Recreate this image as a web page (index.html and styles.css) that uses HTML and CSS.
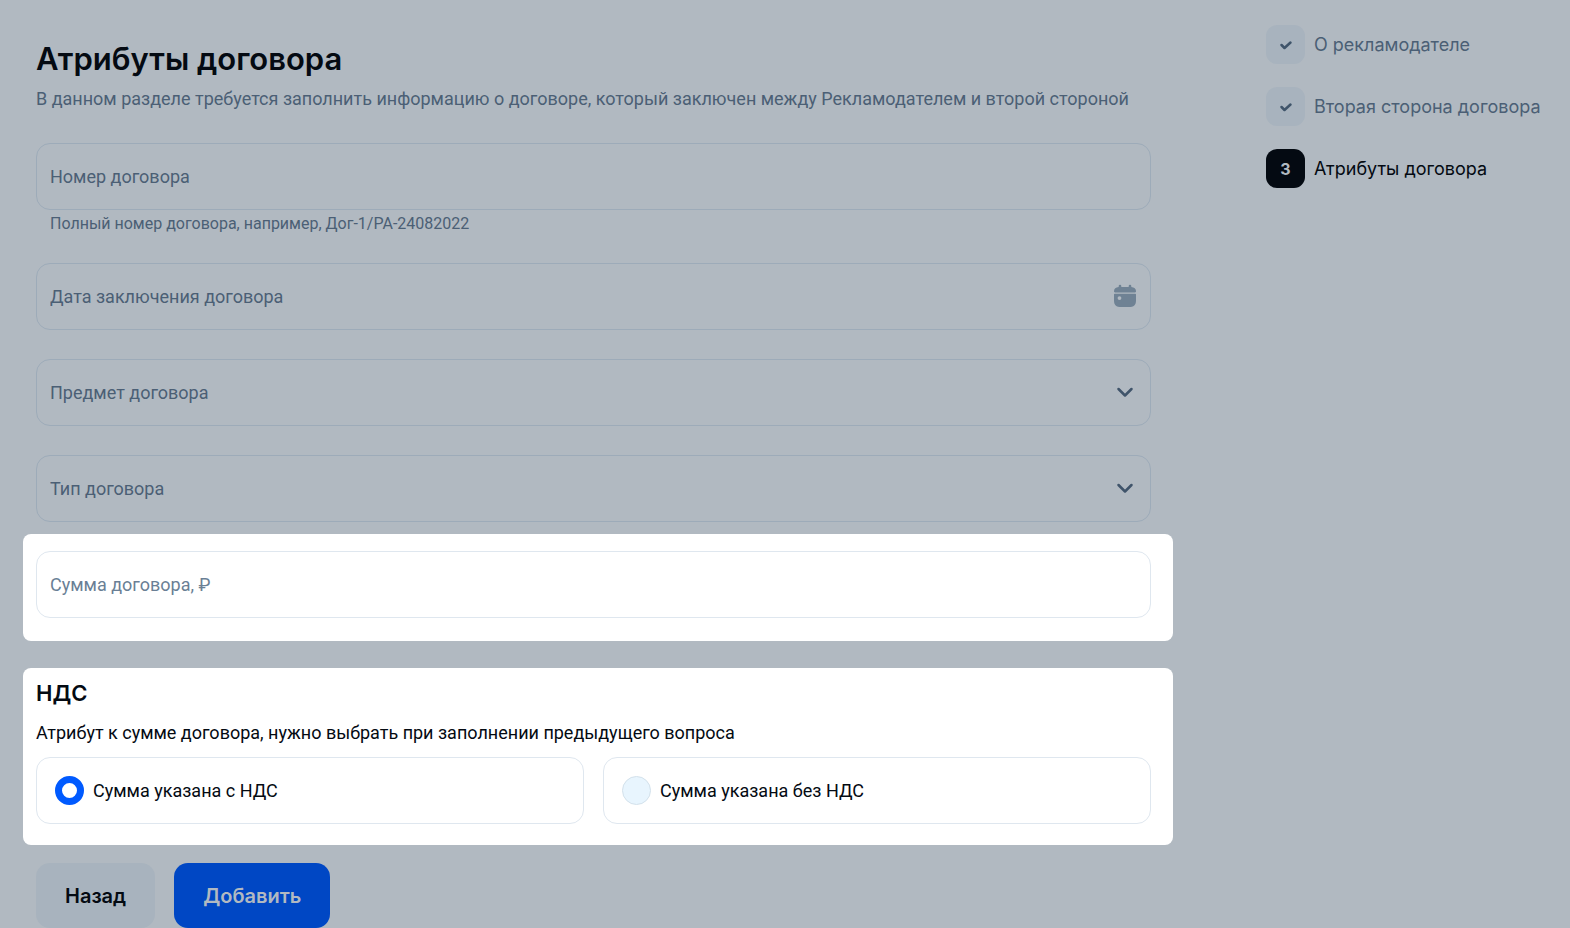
FILE: index.html
```html
<!DOCTYPE html>
<html lang="ru">
<head>
<meta charset="utf-8">
<meta name="viewport" content="width=device-width, initial-scale=1">
<title>Атрибуты договора</title>
<link rel="stylesheet" href="styles.css">
</head>
<body>
<div class="page">
  <form class="form">
    <header class="intro">
      <h1 class="title">Атрибуты договора</h1>
      <p class="lead">В данном разделе требуется заполнить информацию о договоре, который заключен между Рекламодателем и второй стороной</p>
    </header>

    <div class="fields">
      <div class="field">
        <input class="control" type="text" placeholder="Номер договора" aria-label="Номер договора" aria-describedby="number-hint">
        <p class="hint" id="number-hint">Полный номер договора, например, Дог-1/РА-24082022</p>
      </div>
      <div class="field">
        <input class="control" type="text" placeholder="Дата заключения договора" aria-label="Дата заключения договора">
        <svg class="field-icon calendar" viewBox="0 0 24 24" aria-hidden="true">
          <path d="M7 .8a1.300 1.300 0 0 1 1.300 1.300V3h7.400v-.9a1.300 1.300 0 0 1 2.600 0v1C21.300 3.400 23 4.900 23 7.200c0 .75-.4 1.200-1.100 1.200H2.100C1.400 8.400 1 7.950 1 7.200c0-2.300 1.700-3.800 4.700-4.100v-1A1.300 1.300 0 0 1 7 .8Z"/>
          <path fill-rule="evenodd" d="M1.800 9.800h20.400c.5 0 .8.3.8.8v5.600c0 5-2 6.800-7.500 6.800h-7C3 23 1 21.200 1 16.200v-5.600c0-.5.3-.8.800-.8ZM6.500 12.200a1.900 1.900 0 1 0 0 3.800 1.900 1.900 0 0 0 0-3.800Z"/>
        </svg>
      </div>
      <div class="field">
        <select class="control" aria-label="Предмет договора"><option>Предмет договора</option></select>
        <svg class="field-icon chevron" viewBox="0 0 24 24" aria-hidden="true"><path d="m5.500 9 6.500 6.500L18.500 9"/></svg>
      </div>
      <div class="field">
        <select class="control" aria-label="Тип договора"><option>Тип договора</option></select>
        <svg class="field-icon chevron" viewBox="0 0 24 24" aria-hidden="true"><path d="m5.500 9 6.500 6.500L18.500 9"/></svg>
      </div>
    </div>

    <section class="panel panel-sum">
      <input class="control control-lit" type="text" placeholder="Сумма договора, ₽" aria-label="Сумма договора, ₽">
    </section>

    <fieldset class="panel panel-vat">
      <legend class="vat-title">НДС</legend>
      <p class="vat-text">Атрибут к сумме договора, нужно выбрать при заполнении предыдущего вопроса</p>
      <div class="choices">
        <label class="choice"><input class="radio" type="radio" name="vat" checked>Сумма указана с НДС</label>
        <label class="choice"><input class="radio" type="radio" name="vat">Сумма указана без НДС</label>
      </div>
    </fieldset>

    <div class="actions">
      <button class="button button-back" type="button">Назад</button>
      <button class="button button-add" type="submit">Добавить</button>
    </div>
  </form>

  <ol class="steps">
    <li class="step">
      <span class="badge"><svg class="check" viewBox="0 0 16 16" aria-hidden="true"><path d="m3.500 8 3 3 6-5.500"/></svg></span>
      О рекламодателе
    </li>
    <li class="step">
      <span class="badge"><svg class="check" viewBox="0 0 16 16" aria-hidden="true"><path d="m3.500 8 3 3 6-5.500"/></svg></span>
      Вторая сторона договора
    </li>
    <li class="step step-current" aria-current="step">
      <span class="badge">3</span>
      Атрибуты договора
    </li>
  </ol>
</div>
</body>
</html>
```
FILE: styles.css
```css
:root {
  --dim: #b1b9c1;
  --dim-line: #9dabb9;
  --dim-fill: #a8b3be;
  --slate: #4b5f75;
  --ink: #040a12;
  --line: #dfe7ef;
  --blue: #005aff;
}

* {
  box-sizing: border-box;
}

body {
  margin: 0;
  background: var(--dim);
  color: var(--ink);
  font: 18px/24px Roboto, "Noto Sans", sans-serif;
}

h1, p, ol, fieldset {
  margin: 0;
  padding: 0;
  border: 0;
}

.page {
  display: flex;
  gap: 93px;
  padding: 25px 32px 0 23px;
}

.form {
  flex: 1;
  min-width: 0;
}

.intro,
.fields,
.actions {
  padding: 0 22px 0 13px;
}

.intro {
  padding-top: 14px;
}

.title {
  font-family: Inter, sans-serif;
  font-size: 31px;
  line-height: 40px;
  font-weight: 600;
}

.lead {
  margin-top: 8px;
  color: var(--slate);
}

.fields {
  display: flex;
  flex-direction: column;
  gap: 29px;
  margin-top: 32px;
}

.field {
  position: relative;
}

.control {
  display: block;
  width: 100%;
  height: 67px;
  padding: 0 13px;
  border: 1px solid var(--dim-line);
  border-radius: 14px;
  background: transparent;
  color: var(--slate);
  font: inherit;
  appearance: none;
}

.control::placeholder {
  color: inherit;
  opacity: 1;
}

.control-lit {
  border-color: var(--line);
  color: #6a7f95;
}

.hint {
  padding: 4px 14px 0;
  color: var(--slate);
  font-size: 16px;
  line-height: 20px;
}

.field-icon {
  position: absolute;
  top: 21px;
  right: 14px;
  width: 24px;
  height: 24px;
  pointer-events: none;
}

.calendar {
  fill: #6f8294;
}

.chevron {
  fill: none;
  stroke: #3f546a;
  stroke-width: 2.5;
  stroke-linecap: round;
  stroke-linejoin: round;
}

.panel {
  border-radius: 8px;
  background: #fff;
}

.panel-sum {
  margin-top: 12px;
  padding: 17px 22px 23px 13px;
}

.panel-vat {
  min-width: 0;
  margin-top: 27px;
  padding: 9px 22px 21px 13px;
}

.vat-title {
  float: left;
  width: 100%;
  padding: 0;
  font-family: Inter, sans-serif;
  font-size: 22px;
  line-height: 32px;
  font-weight: 600;
}

.vat-text {
  clear: both;
  padding: 12px 0;
}

.choices {
  display: grid;
  grid-template-columns: 1fr 1fr;
  gap: 19px;
}

.choice {
  display: flex;
  align-items: center;
  gap: 9px;
  height: 67px;
  padding: 0 18px;
  border: 1px solid var(--line);
  border-radius: 14px;
}

.radio {
  width: 29px;
  height: 29px;
  margin: 0;
  border: 1px solid #d3e1eb;
  border-radius: 50%;
  background: #e8f5fe;
  appearance: none;
}

.radio:checked {
  border: 7px solid var(--blue);
  background: #fff;
}

.actions {
  display: flex;
  gap: 19px;
  margin-top: 18px;
}

.button {
  height: 65px;
  padding: 0 29px;
  border: 0;
  border-radius: 14px;
  font: 600 20px/24px Inter, sans-serif;
}

.button-back {
  background: var(--dim-fill);
  color: var(--ink);
}

.button-add {
  background: #0047c4;
  color: var(--dim);
}

.steps {
  display: flex;
  flex-direction: column;
  gap: 23px;
  width: 272px;
  list-style: none;
  font-family: Inter, sans-serif;
}

.step {
  display: flex;
  align-items: center;
  gap: 9px;
  color: var(--slate);
  white-space: nowrap;
}

.step-current {
  color: var(--ink);
}

.badge {
  display: flex;
  flex: none;
  align-items: center;
  justify-content: center;
  width: 39px;
  height: 39px;
  border-radius: 11px;
  background: var(--dim-fill);
  font-size: 16px;
  font-weight: 700;
}

.step-current .badge {
  background: var(--ink);
  color: var(--dim);
}

.check {
  width: 16px;
  height: 16px;
  fill: none;
  stroke: #3f546a;
  stroke-width: 2.5;
  stroke-linecap: round;
  stroke-linejoin: round;
}
```
